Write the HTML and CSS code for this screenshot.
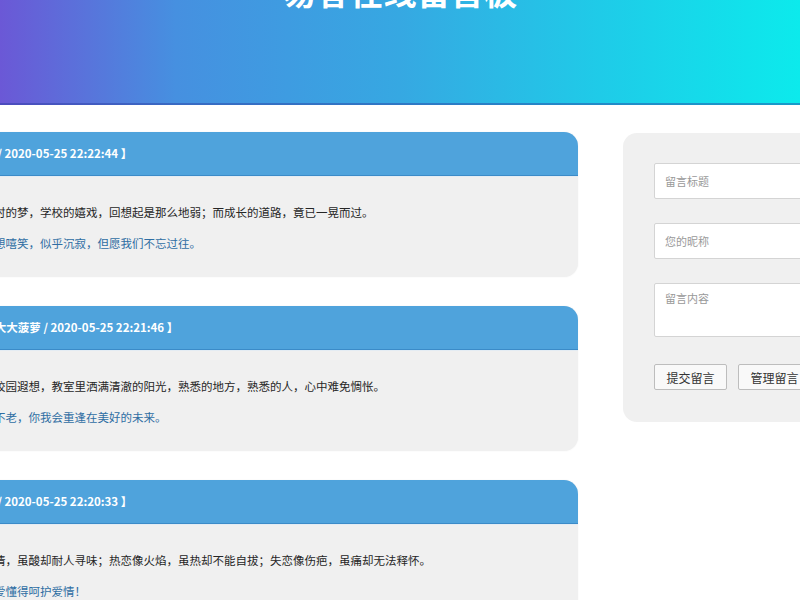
FILE: index.html
```html
<!DOCTYPE html>
<html lang="zh-CN">
<head>
<meta charset="utf-8">
<title>在线留言板</title>
<link rel="stylesheet" href="styles.css">
</head>
<body>
<header class="banner">
  <h1 class="banner-title">易客在线留言板</h1>
</header>
<div class="main">
  <section class="list">
    <article class="card">
      <div class="card-head">【 童年的回忆录 / 小明同学 / 2020-05-25 22:22:44 】</div>
      <div class="card-body">
        <p class="msg">毕业季到了，回忆起那童年时的梦，学校的嬉戏，回想起是那么地弱；而成长的道路，竟已一晃而过。</p>
        <p class="reply">回复：那些年少的欢乐，回想嘻笑，似乎沉寂，但愿我们不忘过往。</p>
      </div>
    </article>
    <article class="card">
      <div class="card-head">【 漫步校园的遐想 / 小小的大大菠萝 / 2020-05-25 22:21:46 】</div>
      <div class="card-body">
        <p class="msg">毕业前夕，漫步在美丽的大校园遐想，教室里洒满清澈的阳光，熟悉的地方，熟悉的人，心中难免惆怅。</p>
        <p class="reply">回复：愿友谊长存，青春永不老，你我会重逢在美好的未来。</p>
      </div>
    </article>
    <article class="card">
      <div class="card-head">【 爱情的三部曲 / 小红同学 / 2020-05-25 22:20:33 】</div>
      <div class="card-body">
        <p class="msg">有人说，暗恋像一份苦涩的情，虽酸却耐人寻味；热恋像火焰，虽热却不能自拔；失恋像伤疤，虽痛却无法释怀。</p>
        <p class="reply">回复：祝愿每个人都能在恋爱懂得呵护爱情！</p>
      </div>
    </article>
  </section>
  <aside class="panel">
    <form class="form">
      <input class="field" type="text" placeholder="留言标题">
      <input class="field" type="text" placeholder="您的昵称">
      <textarea class="field area" placeholder="留言内容"></textarea>
      <div class="actions">
        <button type="button" class="btn">提交留言</button>
        <button type="button" class="btn">管理留言</button>
      </div>
    </form>
  </aside>
</div>
</body>
</html>
```

FILE: styles.css
```css
html, body {
  margin: 0;
  padding: 0;
  overflow: hidden;
  background: #ffffff;
}
body {
  font-family: "Noto Sans CJK SC", "Noto Sans", "Liberation Sans", sans-serif;
  color: #333;
}
.banner {
  height: 103px;
  background: linear-gradient(90deg, #6b58d6 0%, #4690e0 22%, #36a8e2 50%, #1fcbe8 75%, #0ceaec 100%);
  border-bottom: 2px solid rgba(40, 60, 160, 0.45);
  overflow: hidden;
}
.banner-title {
  margin: -29px 0 0;
  line-height: 40px;
  font-size: 33.5px;
  font-weight: 700;
  color: #fff;
  text-align: center;
}
.main {
  display: flex;
  align-items: flex-start;
  gap: 45px;
  margin: 27px 0 0 -164px;
}
.list {
  flex: 0 0 742px;
  display: flex;
  flex-direction: column;
  gap: 29px;
}
.card {
  border-radius: 14px;
  overflow: hidden;
  background: #f0f0f0;
  box-shadow: 0 0 2px rgba(0, 0, 0, 0.06);
}
.card-head {
  height: 43px;
  line-height: 43px;
  padding-left: 20px;
  background: #4fa3dc;
  border-bottom: 1px solid #3b8bc8;
  color: #fff;
  font-size: 11.5px;
  font-weight: 700;
  white-space: nowrap;
}
.card-body {
  height: 101px;
  box-sizing: border-box;
  padding: 27px 0 0 20px;
  border-top: 1px solid #e4ecf3;
}
.card-body p {
  margin: 0;
  font-size: 11.5px;
  line-height: 16px;
  white-space: nowrap;
}
.msg {
  color: #262626;
}
.reply {
  margin-top: 15px !important;
  color: #2f6ea3;
}
.panel {
  flex: 0 0 260px;
  margin-top: 1px;
  height: 289px;
  box-sizing: border-box;
  padding: 30px 0 0 31px;
  background: #f0f0f0;
  border-radius: 14px;
}
.form {
  display: flex;
  flex-direction: column;
  gap: 24px;
}
.field {
  box-sizing: border-box;
  width: 240px;
  height: 36px;
  padding: 0 10px;
  border: 1px solid #d4d4d4;
  border-radius: 2px;
  background: #fff;
  font-family: inherit;
  font-size: 11px;
  color: #333;
  outline: none;
}
.field::placeholder {
  color: #999;
}
.area {
  height: 54px;
  padding-top: 6px;
  resize: none;
}
.actions {
  display: flex;
  gap: 11px;
  margin-top: 3px;
}
.btn {
  box-sizing: border-box;
  height: 26px;
  width: 73px;
  padding: 0;
  border: 1px solid #bdbdbd;
  border-radius: 2px;
  background: #f9f9f9;
  font-family: inherit;
  font-size: 12px;
  color: #333;
}
```
